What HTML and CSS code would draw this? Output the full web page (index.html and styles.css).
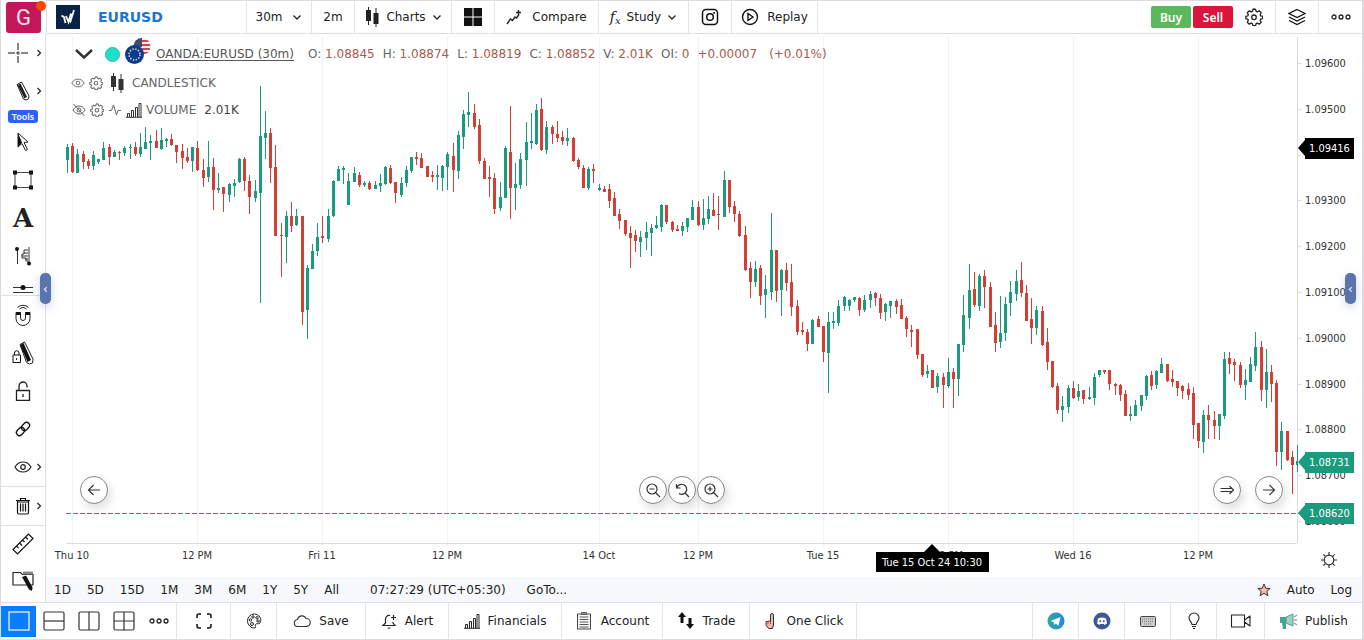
FILE: index.html
```html
<!DOCTYPE html>
<html lang="en">
<head>
    <meta charset="UTF-8">
    <meta name="viewport" content="width=device-width, initial-scale=1.0">
    <title>EURUSD Chart</title>
    <link rel="stylesheet" href="styles.css">
</head>
<body>
    <svg class="sprite" aria-hidden="true">
        <symbol id="chevron" viewBox="0 0 10 10"><path d="M1.5 3.5 5 7l3.5-3.5" fill="none" stroke="currentColor" stroke-width="1.3"/></symbol>
        <symbol id="caret" viewBox="0 0 6 8"><path d="M1.5 1 4.5 4l-3 3" fill="none" stroke="currentColor" stroke-width="1.2"/></symbol>
        <symbol id="gear" viewBox="0 0 18 18"><path d="M9 1l1.6.3.5 2 1.2.5 1.9-1 2 2-1 1.9.5 1.2 2 .5v2.2l-2 .5-.5 1.2 1 1.9-2 2-1.9-1-1.2.5-.5 2H7.9l-.5-2-1.2-.5-1.9 1-2-2 1-1.9-.5-1.2-2-.5V8.4l2-.5.5-1.2-1-1.9 2-2 1.9 1 1.2-.5.5-2z" fill="none" stroke="currentColor" stroke-width="1.3" stroke-linejoin="round"/><circle cx="9" cy="9.3" r="2.3" fill="none" stroke="currentColor" stroke-width="1.3"/></symbol>
        <symbol id="candles" viewBox="0 0 16 20"><path d="M4.5 0v18M12 1v19" stroke="currentColor" stroke-width="1"/><path d="M2 3h5v11H2zM9.5 6h5v11h-5z" fill="currentColor"/></symbol>
        <symbol id="bars" viewBox="0 0 16 16"><path d="M1.5 15v-3.500h2V15M5.500 15V8.500h2V15M9.500 15V5.500h2V15M13 15V1.500h2V15M0 15.300h16" fill="none" stroke="currentColor"/></symbol>
        <symbol id="dots" viewBox="0 0 20 8"><g fill="none" stroke="currentColor" stroke-width="1.3"><circle cx="3" cy="4" r="2"/><circle cx="10" cy="4" r="2"/><circle cx="17" cy="4" r="2"/></g></symbol>
        <symbol id="pencil" viewBox="0 0 16 20"><path d="M2 3.500 6.500 1 14 15l-.5 3-2.500 1L8.500 18z" fill="#fff" stroke="currentColor"/><path d="M2.500 4 5.500 2.500 12 16l-2.500 1.500z" fill="currentColor"/></symbol>
        <symbol id="eye" viewBox="0 0 18 12"><g fill="none" stroke="currentColor" stroke-width="1.2"><path d="M1 6c2-3.500 5-5 8-5s6 1.500 8 5c-2 3.500-5 5-8 5S3 9.500 1 6z"/><circle cx="9" cy="6" r="2.3"/></g></symbol>
        <symbol id="lock" viewBox="0 0 16 20"><g fill="none" stroke="currentColor" stroke-width="1.3"><path d="M1.500 9.500h13v10h-13zM4 9V5a4 4 0 0 1 8 0v1.500M8 13v3"/></g></symbol>
    </svg>

    <div class="app">
        <button class="profile" aria-label="Profile">G<span class="dot"></span></button>

        <header class="topbar">
            <div class="symbol">
                <svg class="brand" viewBox="0 0 24 24"><path d="M0 0h24v24H0z" fill="#0a2245"/><path d="M5.500 10.500 8 12l1.500 6M10 11l2.500 6L15 8.500M13 13l1.500 3L18 5" fill="none" stroke="#fff" stroke-width="1.800"/></svg>
                <a href="#">EURUSD</a>
            </div>
            <button class="cell interval">30m <svg class="ic-10"><use href="#chevron"/></svg></button>
            <button class="cell quick">2m</button>
            <button class="cell charts"><svg class="ic-candles"><use href="#candles"/></svg> Charts <svg class="ic-10"><use href="#chevron"/></svg></button>
            <button class="cell icon-cell" aria-label="Layout"><svg class="ic-20" viewBox="0 0 20 20"><path d="M1 1h8.500v8.500H1zM10.500 1H19v8.500h-8.500zM1 10.500h8.500V19H1zM10.500 10.500H19V19h-8.500z" fill="#111"/></svg></button>
            <button class="cell compare"><svg class="ic-16" viewBox="0 0 16 16"><path d="M1 15l3.500-5 2 1.500L9 8l1.500 1L13 5.500M12.500 1v5M10 3.500h5" fill="none" stroke="#222" stroke-width="1.400"/></svg> Compare</button>
            <button class="cell study"><i class="fx">f<sub>x</sub></i> Study <svg class="ic-10"><use href="#chevron"/></svg></button>
            <button class="cell icon-cell" aria-label="Snapshot"><svg class="ic-18" viewBox="0 0 18 18"><g fill="none" stroke="#111" stroke-width="1.500"><rect x="1.500" y="1.500" width="15" height="15" rx="3.500"/><circle cx="9" cy="9" r="3.300"/></g><circle cx="13" cy="5" r="1" fill="#111"/></svg></button>
            <button class="cell replay"><svg class="ic-18" viewBox="0 0 18 18"><g fill="none" stroke="#111" stroke-width="1.400"><circle cx="9" cy="9" r="7.500"/><path d="M7 5.500v7L12 9z"/></g></svg> Replay</button>
            <div class="orders">
                <button class="buy">Buy</button>
                <button class="sell">Sell</button>
            </div>
            <button class="cell icon-cell" aria-label="Settings"><svg class="ic-18"><use href="#gear"/></svg></button>
            <button class="cell icon-cell" aria-label="Layers"><svg class="ic-18" viewBox="0 0 18 18"><path d="M9 1.500 17 5.500 9 9.500 1 5.500zM1 9l8 4 8-4M1 12.500l8 4 8-4" fill="none" stroke="#111" stroke-width="1.300"/></svg></button>
            <button class="cell icon-cell last" aria-label="More"><svg class="ic-dots"><use href="#dots"/></svg></button>
        </header>

        <nav class="sidebar">
            <div class="tools grow">
                <button aria-label="Crosshair" class="has-caret crosshair"><svg class="ic-20" viewBox="0 0 20 20"><path d="M10 0v7M10 13v7M0 10h7M13 10h7" stroke="#111"/><path d="M9 9h2v2H9z" fill="none" stroke="#111" stroke-width=".8"/></svg><svg class="ic-caret"><use href="#caret"/></svg></button>
                <button aria-label="Drawing tools" class="has-caret"><svg class="ic-pencil"><use href="#pencil"/></svg><svg class="ic-caret"><use href="#caret"/></svg></button>
                <span class="tag">Tools</span>
                <button aria-label="Pointer"><svg class="ic-20" viewBox="0 0 20 20"><path d="M5 1l10 9-4 .5 3.500 7-2 1-3.500-7L5 15z" fill="#fff" stroke="#222"/><path d="M5 1l4 9.500L5 15z" fill="#111"/></svg></button>
                <button aria-label="Rectangle"><svg class="ic-22" viewBox="0 0 22 22"><path d="M3 3.500h16v15H3z" fill="none" stroke="#444"/><path d="M1 1.500h4v4H1zM17 1.500h4v4h-4zM1 16.500h4v4H1zM17 16.500h4v4h-4z" fill="#111"/></svg></button>
                <button aria-label="Text" class="letter">A</button>
                <button aria-label="Volume profile"><svg class="ic-20" viewBox="0 0 20 20"><path d="M4.500 2v16M16 1v16M15 4h-4v4H9v4h4v3h2M15 7h-4M15 10H9M15 13h-3" fill="none" stroke="#333"/><circle cx="4" cy="3" r="2" fill="#111"/><circle cx="16" cy="17.500" r="2" fill="#111"/></svg></button>
                <button aria-label="Lines" class="clipped"><svg class="ic-22" viewBox="0 0 22 22"><path d="M1 11.500h20M1 16.500h20" stroke="#333"/><circle cx="11" cy="11.500" r="2.500" fill="#111"/></svg></button>
            </div>
            <div class="tools">
                <button aria-label="Magnet"><svg class="ic-22" viewBox="0 0 22 22"><g fill="none" stroke="#222"><path d="M4 8.500v6a7 7 0 0 0 14 0v-6h-4.500v5.500a2.500 2.500 0 0 1-5 0V8.500zM7.500 5a5 5 0 0 1 7 0M5.500 3.500a8 8 0 0 1 11 0"/></g><path d="M4 8h4.500v3H4zM13.500 8H18v3h-4.500z" fill="#111"/></svg></button>
                <button aria-label="Stay in drawing mode"><svg class="ic-lockpen" viewBox="0 0 22 24"><path d="M1 14h7.500v7.500H1zM2.500 14v-2a2.200 2.200 0 0 1 4.500 0v2M4.700 17v2" fill="none" stroke="#111"/><path d="M8 3.500 12.500 1 21 18l-.5 4-3 1-3-1.500z" fill="#fff" stroke="#222"/><path d="M8 4l3.500-2 7.500 17-3.500 2z" fill="#111"/></svg></button>
                <button aria-label="Lock drawings"><svg class="ic-pencil"><use href="#lock"/></svg></button>
                <button aria-label="Link"><svg class="ic-18" viewBox="0 0 18 18"><g fill="none" stroke="#111" stroke-width="1.300"><rect x="-4.500" y="-3" width="9" height="6" rx="3" transform="translate(11.500 6.500) rotate(-45)"/><rect x="-4.500" y="-3" width="9" height="6" rx="3" transform="translate(6.500 11.500) rotate(-45)"/></g></svg></button>
                <button aria-label="Hide drawings" class="has-caret"><svg class="ic-eye"><use href="#eye"/></svg><svg class="ic-caret"><use href="#caret"/></svg></button>
            </div>
            <div class="tools">
                <button aria-label="Delete" class="has-caret"><svg class="ic-18" viewBox="0 0 18 18"><path d="M2 3.500h14M6.500 3V1.500h5V3M3.500 4v11.500a1.500 1.500 0 0 0 1.500 1.500h8a1.500 1.500 0 0 0 1.500-1.500V4M6.500 6.500v8M9 6.500v8M11.500 6.500v8M3 5h12" fill="none" stroke="#111" stroke-width="1.200"/></svg><svg class="ic-caret"><use href="#caret"/></svg></button>
            </div>
            <div class="tools bottom">
                <button aria-label="Measure"><svg class="ic-22" viewBox="0 0 22 22"><path d="M1 16.500 16.500 1 21 5.500 5.500 21zM4.500 13l2 2M7.500 10l2.500 2.500M10.500 7l2 2M13.500 4l2.500 2.500" fill="none" stroke="#111" stroke-width="1.200"/></svg></button>
                <button aria-label="Saved drawings"><svg class="ic-22" viewBox="0 0 22 22"><path d="M1 3.500h7.500l2 2H21V16H1z" fill="none" stroke="#222" stroke-width="1.200"/><path d="M11 2.500h10v3H11z" fill="#888"/><path d="M10 8l4-1.500 6.500 12-.5 3.500-3-1.500z" fill="#111"/></svg></button>
            </div>
        </nav>

        <main class="workspace">
            <section class="chart">
                <svg id="plot" class="plot"></svg>

                <div class="legend">
                    <div class="legend-row first">
                        <svg class="ic-toggle" viewBox="0 0 20 12"><path d="M2 2l8 7.500L18 2" fill="none" stroke="#333" stroke-width="2.500"/></svg>
                        <span class="status"></span>
                        <svg class="flags" viewBox="0 0 26 26"><defs><clipPath id="us"><circle cx="17" cy="8.500" r="8.500"/></clipPath></defs><g clip-path="url(#us)"><path d="M8 0h18v18H8z" fill="#eee"/><path d="M8 3h18M8 7h18M8 11h18M8 15h18" stroke="#d0454c" stroke-width="2"/><path d="M8 0h9v9H8z" fill="#414a68"/></g><circle cx="9.500" cy="16.500" r="9.500" fill="#073b97"/><circle cx="9.500" cy="16.500" r="5.500" fill="none" stroke="#e8dc7a" stroke-width="1.500" stroke-dasharray="1.500 1.380"/></svg>
                        <a href="#" class="pair">OANDA:EURUSD (30m)</a>
                        <div class="quotes">
                            <span>O: <b>1.08845</b></span>
                            <span>H: <b>1.08874</b></span>
                            <span>L: <b>1.08819</b></span>
                            <span>C: <b>1.08852</b></span>
                            <span>V: <b>2.01K</b></span>
                            <span>OI: <b>0</b></span>
                            <b>+0.00007</b>
                            <b class="pct">(+0.01%)</b>
                        </div>
                    </div>
                    <div class="legend-row">
                        <svg class="ic-eye-s"><use href="#eye"/></svg>
                        <svg class="ic-14"><use href="#gear"/></svg>
                        <svg class="ic-candles"><use href="#candles"/></svg>
                        <span>CANDLESTICK</span>
                    </div>
                    <div class="legend-row tight">
                        <svg class="ic-14" viewBox="0 0 14 14"><path d="M1 7c2-3 4-4 6-4s4.500 1 6 4c-1.500 3-4 4-6 4S3 10 1 7zM1.500 1l11 12" fill="none" stroke="currentColor"/><circle cx="7" cy="7" r="2" fill="none" stroke="currentColor"/></svg>
                        <svg class="ic-14"><use href="#gear"/></svg>
                        <svg class="ic-14" viewBox="0 0 14 14"><path d="M1 7.500h2.500l2-5.500 3 10 1.500-4.500h3" fill="none" stroke="currentColor"/></svg>
                        <svg class="ic-16 dark"><use href="#bars"/></svg>
                        <span>VOLUME</span>
                        <span class="amount">2.01K</span>
                    </div>
                </div>

                <div class="nav-left">
                    <button class="round" aria-label="Scroll left"><svg class="ic-16" viewBox="0 0 16 16"><path d="M14 8H2.500M7.500 3l-5 5 5 5"/></svg></button>
                </div>
                <div class="nav-zoom">
                    <button class="round" aria-label="Zoom out"><svg class="ic-16" viewBox="0 0 16 16"><circle cx="7" cy="7" r="5"/><path d="M10.500 10.500 15 15M4.500 7h5"/></svg></button>
                    <button class="round" aria-label="Reset zoom"><svg class="ic-16" viewBox="0 0 16 16"><path d="M2.500 2v4h4M3 5.500A5 5 0 1 1 5 11.500M10.500 10.500 15 15"/></svg></button>
                    <button class="round" aria-label="Zoom in"><svg class="ic-16" viewBox="0 0 16 16"><circle cx="7" cy="7" r="5"/><path d="M10.500 10.500 15 15M4.500 7h5M7 4.500v5"/></svg></button>
                </div>
                <div class="nav-right">
                    <button class="round" aria-label="Go to latest"><svg class="ic-16" viewBox="0 0 16 16"><path d="M1.500 6.500h11M1.500 9.500h11M10.500 4l4 4-4 4"/></svg></button>
                    <button class="round" aria-label="Scroll right"><svg class="ic-16" viewBox="0 0 16 16"><path d="M2 8h11.500M8.500 3l5 5-5 5"/></svg></button>
                </div>
                <button class="theme" aria-label="Theme"><svg class="ic-16" viewBox="0 0 16 16"><circle cx="8" cy="8" r="4.800"/><path d="M8 0v3M8 13v3M0 8h3M13 8h3M2.300 2.300l2 2M11.700 11.700l2 2M2.300 13.700l2-2M11.700 4.300l2-2"/></svg></button>
                <button class="handle left" aria-label="Toggle tools">‹</button>
                <button class="handle right" aria-label="Toggle panel">‹</button>
            </section>

            <div class="ranges">
                <button>1D</button>
                <button>5D</button>
                <button>15D</button>
                <button>1M</button>
                <button>3M</button>
                <button>6M</button>
                <button>1Y</button>
                <button>5Y</button>
                <button>All</button>
                <button class="clock">07:27:29 (UTC+05:30)</button>
                <button>GoTo...</button>
                <button class="star" aria-label="Favourite"><svg class="ic-14" viewBox="0 0 14 14"><path d="M7 1l1.800 4.200 4.400.3-3.400 2.900 1.100 4.400L7 10.400l-3.900 2.400 1.100-4.400L.8 5.500l4.400-.3z" fill="#f7b9b4" stroke="#333"/></svg></button>
                <button>Auto</button>
                <button>Log</button>
            </div>
        </main>

        <footer class="bottombar">
            <div class="layouts">
                <button class="active" aria-label="Single"><svg class="ic-22" viewBox="0 0 22 22"><rect x="1" y="2" width="20" height="18"/></svg></button>
                <button aria-label="Two rows"><svg class="ic-22" viewBox="0 0 22 22"><rect x="1" y="2" width="20" height="18" rx="1.500"/><path d="M1 11h20"/></svg></button>
                <button aria-label="Two columns"><svg class="ic-22" viewBox="0 0 22 22"><rect x="1" y="2" width="20" height="18" rx="1.500"/><path d="M11 2v18"/></svg></button>
                <button aria-label="Grid"><svg class="ic-22" viewBox="0 0 22 22"><rect x="1" y="2" width="20" height="18" rx="1.500"/><path d="M1 11h20M11 2v18"/></svg></button>
                <button aria-label="More layouts"><svg class="ic-dots"><use href="#dots"/></svg></button>
            </div>
            <button class="cell full" aria-label="Fullscreen"><svg class="ic-16" viewBox="0 0 16 16"><path d="M1 5V3a2 2 0 0 1 2-2h2M11 1h2a2 2 0 0 1 2 2v2M15 11v2a2 2 0 0 1-2 2h-2M5 15H3a2 2 0 0 1-2-2v-2" fill="none" stroke="#111" stroke-width="1.500"/></svg></button>
            <button class="cell palette" aria-label="Colors"><svg class="ic-16" viewBox="0 0 16 16"><g fill="none" stroke="#222"><path d="M8 1a7 7 0 1 0 1 14c1.500-.5 0-2 .5-3.500s3 0 4.500-1.500C16.500 6 13 1 8 1z"/><circle cx="4.500" cy="7" r="1.200"/><circle cx="7" cy="4" r="1.200"/><circle cx="11" cy="4.800" r="1.200"/><circle cx="12" cy="8" r="1.200"/><circle cx="6" cy="11" r="1.500"/></g></svg></button>
            <button class="cell save"><svg class="ic-18" viewBox="0 0 18 18"><path d="M5 14.500a3.500 3.500 0 0 1-.5-7 4.500 4.500 0 0 1 8.500-1 4 4 0 0 1 .5 8z" fill="none" stroke="#333" stroke-width="1.100"/></svg> Save</button>
            <button class="cell alert"><svg class="ic-16" viewBox="0 0 16 16"><path d="M9 2.500c-3-.5-4.500 1.500-4.500 4V10L2 12.500h12L12 10V9M6.500 15h3M12.500 2v5M10 4.500h5" fill="none" stroke="#222" stroke-width="1.200"/></svg> Alert</button>
            <button class="cell financials"><svg class="ic-16"><use href="#bars"/></svg> Financials</button>
            <button class="cell account"><svg class="ic-18" viewBox="0 0 18 18"><path d="M2.500 2h13v15h-13z" fill="none" stroke="#444"/><path d="M6.500.5h5v2h-5zM4.500 5h9M4.500 7.500h9M4.500 10h9M4.500 12.500h9M4.500 15h9" fill="none" stroke="#555"/></svg> Account</button>
            <button class="cell trade"><svg class="ic-18" viewBox="0 0 18 18"><path d="M5 0l4 5H6.500v6h-3V5H1zM13 17l-4-5h2.500V6h3v6H17z" fill="#111"/></svg> Trade</button>
            <button class="cell oneclick"><svg class="ic-16" viewBox="0 0 16 16"><path d="M7.500 8V2a1.500 1.500 0 0 1 3 0v10l-1 3.500H5.500L3 12V8.500z" fill="#f4b5b0" stroke="#333"/><path d="M5 8v3M7.500 8v3" stroke="#a55"/></svg> One Click</button>
            <span class="fill"></span>
            <a href="#" class="cell social" aria-label="Telegram"><svg class="ic-18" viewBox="0 0 18 18"><defs><linearGradient id="tg"><stop offset="0" stop-color="#2fa99a"/><stop offset="1" stop-color="#1b8be0"/></linearGradient></defs><circle cx="9" cy="9" r="8.500" fill="url(#tg)"/><path d="M3.500 9 13.500 5l-2 9-3-2.500L7 13l-.3-3z" fill="#fff"/></svg></a>
            <a href="#" class="cell social" aria-label="Discord"><svg class="ic-18" viewBox="0 0 18 18"><circle cx="9" cy="9" r="8.500" fill="#3e5694"/><path d="M5 6.500q4-2 8 0l1 5-2.500 1.500-.5-1H7l-.5 1L4 11.500z" fill="#fff"/><circle cx="7.300" cy="9.300" r="1" fill="#3e5694"/><circle cx="10.700" cy="9.300" r="1" fill="#3e5694"/></svg></a>
            <button class="cell social" aria-label="Shortcuts"><svg class="ic-16" viewBox="0 0 16 16"><rect x=".5" y="3.500" width="15" height="10" rx="1" fill="#ccc" stroke="#444"/><path d="M2 6h12M2 8.500h12M4 11h8" stroke="#777" stroke-dasharray="1 1"/></svg></button>
            <button class="cell social" aria-label="Ideas"><svg class="ic-18" viewBox="0 0 18 18"><path d="M7 12.500C7 10 4 9 4 6a5 5 0 0 1 10 0c0 3-3 4-3 6.500zM7 14.500h4M8 16.500h2" fill="none" stroke="#222" stroke-width="1.100"/></svg></button>
            <button class="cell video" aria-label="Record"><svg class="ic-22" viewBox="0 0 22 22"><path d="M1.500 5h13v12h-13zM14.500 10l5.500-4v10l-5.500-4" fill="none" stroke="#222" stroke-width="1.100" stroke-linejoin="round"/></svg></button>
            <button class="cell publish"><svg class="ic-18" viewBox="0 0 18 18"><path d="M1 5h6v6H1z" fill="#4f9f8e"/><path d="M7 5l7-3v12l-7-3z" fill="#9fcfc2" stroke="#4f9f8e"/><path d="M3 11h4v6H4z" fill="#4f9f8e"/><path d="M15 5l3-2M15 8h3M15 11l3 2" stroke="#777"/></svg> Publish</button>
        </footer>
    </div>

    <script src="chart.js"></script>
</body>
</html>
```
FILE: styles.css
```css
* {
    box-sizing: border-box;
}
body {
    margin: 0;
    font-family: "DejaVu Sans", Verdana, sans-serif;
    font-size: 12px;
    color: #222;
    background: #fff;
}
button {
    font: inherit;
    color: inherit;
    background: none;
    border: none;
    padding: 0;
    cursor: pointer;
}
svg {
    display: block;
    flex: none;
}
.sprite {
    position: absolute;
    width: 0;
    height: 0;
}
.app {
    display: grid;
    grid-template-columns: 45px minmax(0, 1fr);
    grid-template-rows: 34px minmax(0, 1fr) 37px;
    height: 100vh;
    border: 1px solid #dcdce0;
    border-right: 2px solid #dcdce0;
    border-top-width: 0;
}

/* icon sizes */
.ic-10 { width: 10px; height: 10px; }
.ic-14 { width: 14px; height: 14px; }
.ic-16 { width: 16px; height: 16px; }
.ic-18 { width: 18px; height: 18px; }
.ic-20 { width: 20px; height: 20px; }
.ic-22 { width: 22px; height: 22px; }
.ic-candles { width: 16px; height: 20px; }
.ic-dots { width: 20px; height: 8px; }
.ic-caret { width: 6px; height: 8px; }
.ic-pencil { width: 16px; height: 20px; }
.ic-lockpen { width: 22px; height: 24px; }
.ic-eye { width: 18px; height: 12px; }
.ic-eye-s { width: 14px; height: 10px; }
.ic-toggle { width: 20px; height: 12px; }

/* top bar */
.profile {
    position: relative;
    justify-self: center;
    width: 35px;
    height: 31px;
    margin-top: 2px;
    border-radius: 3px;
    background: #c2185b;
    color: #fbe3ec;
    font-family: Roboto, sans-serif;
    font-size: 22px;
}
.dot {
    position: absolute;
    top: -1px;
    right: -5px;
    width: 10px;
    height: 10px;
    border-radius: 50%;
    background: #ff4500;
}
.topbar {
    display: flex;
    border-top: 1px solid #dcdce0;
    border-bottom: 1px solid #dfdfe4;
    border-left: 1px solid #dfdfe4;
}
.symbol {
    display: flex;
    align-items: center;
    gap: 18px;
    width: 200px;
    padding-left: 9px;
    border-right: 1px solid #e3e3e8;
}
.symbol a {
    color: #1976d2;
    font-size: 14px;
    font-weight: bold;
    text-decoration: none;
}
.brand {
    width: 24px;
    height: 24px;
}
.cell {
    display: flex;
    align-items: center;
    justify-content: center;
    gap: 8px;
    border-right: 1px solid #e3e3e8;
    white-space: nowrap;
}
.interval {
    width: 65px;
    gap: 10px;
}
.quick { width: 43px; }
.charts { width: 97px; gap: 6px; }
.icon-cell { width: 43px; }
.compare { width: 104px; gap: 10px; }
.study { width: 90px; gap: 6px; }
.replay { width: 86px; }
.last { border-right: none; }
.fx {
    font-family: "DejaVu Serif", serif;
    font-size: 14px;
}
.fx sub {
    font-size: 10px;
    vertical-align: -2px;
}
.orders {
    display: flex;
    align-items: center;
    gap: 2px;
    margin-left: auto;
}
.orders button {
    width: 40px;
    height: 22px;
    border-radius: 2px;
    color: #fff;
    font-family: "Noto Sans", sans-serif;
    font-size: 12px;
    font-weight: 600;
}
.orders .buy { background: #5cb85c; }
.orders .sell { background: #dc143c; }

/* left tools */
.sidebar {
    display: flex;
    flex-direction: column;
    border-right: 1px solid #dfdfe4;
}
.tools {
    display: flex;
    flex-direction: column;
    border-bottom: 1px solid #dfdfe4;
}
.tools.grow {
    flex: 1;
    min-height: 0;
    overflow: hidden;
}
.tools button {
    display: flex;
    align-items: center;
    justify-content: center;
    flex: none;
    height: 38px;
    position: relative;
}
.tools .has-caret .ic-caret {
    position: absolute;
    right: 3px;
}
.tools .crosshair {
    padding-right: 10px;
}
.tools .letter {
    font-family: "DejaVu Serif", serif;
    font-size: 26px;
    font-weight: bold;
    line-height: 1;
}
.tools .clipped {
    height: 24px;
}
.tools.bottom {
    border-bottom: none;
    padding-bottom: 4px;
}
.tools.bottom button {
    height: 36px;
}
.tag {
    align-self: center;
    height: 13px;
    padding: 0 4px;
    border-radius: 3px;
    background: #2962ff;
    color: #fff;
    font-family: "Noto Sans", sans-serif;
    font-size: 9px;
    font-weight: 600;
    line-height: 13px;
}

/* chart */
.workspace {
    display: flex;
    flex-direction: column;
    min-width: 0;
}
.chart {
    position: relative;
    flex: 1;
    min-height: 0;
}
.plot {
    position: absolute;
    width: 100%;
    height: 100%;
}
.plot text {
    font-family: "DejaVu Sans Condensed", "DejaVu Sans", sans-serif;
    font-stretch: condensed;
    font-size: 11px;
    fill: #333;
}
.plot text.on-tag { fill: #fff; }
.plot .middle { text-anchor: middle; }
.grid { stroke: #eff2fa; }
.axis { stroke: #dcdce2; }
.up { fill: #1a9b7d; }
.down { fill: #d43f35; }
.level {
    stroke: #1a9b7d;
    stroke-dasharray: 5 2;
}
.ink { fill: #000; }

.legend {
    position: absolute;
    top: 5px;
    left: 25px;
}
.legend-row {
    display: flex;
    align-items: center;
    gap: 4px;
    height: 28px;
    color: #666;
}
.legend-row.first {
    gap: 5px;
    height: 30px;
    padding-left: 3px;
}
.legend b {
    color: #a35c50;
    font-weight: normal;
}
.legend .pair {
    color: #555;
    text-underline-offset: 2px;
}
.quotes {
    display: flex;
    gap: 8px;
    margin-left: 9px;
}
.legend .pct {
    margin-left: 4px;
}
.legend .status {
    width: 15px;
    height: 15px;
    margin-left: 6px;
    border: 1px solid #35b5a5;
    border-radius: 50%;
    background: #1de0cb;
}
.legend .flags {
    width: 26px;
    height: 26px;
    margin-bottom: 6px;
}
.legend .ic-candles,
.legend .dark {
    color: #333;
}
.legend .ic-candles {
    margin: 0 3px 0 2px;
}
.legend-row.tight {
    height: 26px;
    padding-left: 1px;
}
.amount {
    margin-left: 4px;
    color: #444;
}
.nav-left,
.nav-zoom,
.nav-right {
    position: absolute;
    bottom: 73px;
    display: flex;
}
.nav-left { left: 34px; }
.nav-zoom {
    left: 50%;
    gap: 1px;
    margin-left: -65px;
}
.nav-right {
    right: 79px;
    gap: 14px;
}
.round {
    display: flex;
    align-items: center;
    justify-content: center;
    width: 28px;
    height: 28px;
    border: 1px solid #888;
    border-radius: 50%;
    background: #fff;
    box-shadow: 3px 5px 10px rgba(0, 0, 0, 0.12);
}
.round svg,
.theme svg,
.layouts svg {
    fill: none;
    stroke: #333;
    stroke-width: 1.2;
}
.theme {
    position: absolute;
    right: 25px;
    bottom: 9px;
}
.handle {
    position: absolute;
    top: 239px;
    width: 11px;
    height: 31px;
    border-radius: 5px;
    background: #5a75ae;
    color: #fff;
    line-height: 28px;
    box-shadow: 0 3px 10px rgba(90, 117, 174, 0.3);
}
.handle.left { left: -6px; }
.handle.right { right: 6px; }

.ranges {
    display: flex;
    align-items: center;
    gap: 16px;
    height: 25px;
    padding: 0 10px 0 8px;
    background: #f7f8fb;
}
.ranges .clock {
    margin: 0 5px 0 15px;
}
.ranges .star {
    margin-left: auto;
}

/* bottom bar */
.bottombar {
    grid-column: 1 / -1;
    display: flex;
    border-top: 1px solid #dfdfe4;
}
.layouts {
    display: flex;
    align-items: center;
    width: 176px;
    border-right: 1px solid #e3e3e8;
}
.layouts button {
    display: flex;
    align-items: center;
    justify-content: center;
    width: 35px;
    height: 31px;
}
.layouts .active { background: #0a7cff; }
.layouts .active svg { stroke: #fff; }
.full { width: 54px; }
.palette { width: 46px; }
.save { width: 89px; }
.alert { width: 83px; }
.financials { width: 113px; }
.account { width: 101px; }
.trade { width: 87px; }
.oneclick { width: 107px; }
.social { width: 46px; }
.video { width: 48px; }
.publish {
    width: 97px;
    border-right: none;
}
.fill {
    flex: 1;
    border-right: 1px solid #e3e3e8;
}
```
FILE: chart.js
```js
// one candle per entry: colour, high, body top, body bottom, low
// levels are chart units counted downwards, 45.8 units = 0.001
const rows = `
g144,147,160,173 r143,146,172,173 g149,154,173,173 r151,154,162,169 r159,161,166,169 g151,155,166,170
g159,159,162,164 g142,148,160,160 r144,147,157,165 g150,152,157,157 r151,152,153,160 g146,148,153,156
g144,147,148,159 r142,147,154,156 g133,147,154,157 g127,142,149,149 g135,141,143,160 r130,141,148,148
g128,140,149,150 g138,139,141,147 r134,139,145,146 r145,145,152,163 r144,151,158,169 r148,157,161,163
g147,147,161,172 r141,148,170,171 r159,170,178,187 g141,167,177,182 r158,167,190,210 g173,188,190,193
r187,187,194,212 g183,184,195,202 g179,183,186,197 g158,159,182,183 r157,159,181,191 r175,181,197,214
g180,191,198,202 g86,136,193,303 g111,133,138,159 r128,133,168,183 r145,167,236,236 r223,235,236,277
g211,216,237,263 r202,216,226,232 g209,216,225,226 r216,216,312,325 g265,268,310,339 g244,251,269,269
g223,237,251,256 r216,236,238,243 g209,216,239,242 g180,181,216,217 g166,169,181,181 g166,168,170,184
g173,181,205,205 g167,173,182,182 r172,175,185,187 g181,183,185,187 r181,183,189,190 g181,185,189,189
g174,183,186,192 g166,167,184,185 r165,168,183,184 r182,182,193,203 g177,183,195,197 g166,170,183,187
g157,157,171,173 r152,157,159,165 r153,158,168,168 r166,166,177,177 r171,175,177,182 g165,175,177,190
g165,166,178,191 g152,154,167,190 r143,156,170,192 g131,135,171,179 g110,114,137,149 g92,112,115,127
r104,113,127,129 r119,125,161,164 r158,161,179,179 r166,177,179,197 r173,178,209,214 g182,197,208,211
g146,148,198,198 r106,152,188,219 g163,184,188,210 g153,159,185,189 g122,142,160,186 g113,141,143,149
g104,110,144,145 r98,109,150,151 g121,127,150,154 r125,127,134,144 r121,134,138,142 r131,137,141,145
g128,138,141,146 r137,138,161,162 r158,160,167,169 r165,168,188,188 g167,169,188,190 r164,169,171,183
g184,188,190,191 r186,189,192,192 r184,189,201,208 r192,198,216,216 r209,214,221,229 r220,220,234,236
r226,233,238,268 r230,235,241,252 g231,237,242,257 g222,232,238,250 g224,228,233,256 g216,225,228,229
g204,205,227,232 r205,205,222,224 r221,222,230,232 r225,229,231,231 g222,226,231,236 g218,218,227,232
g200,207,220,220 r201,207,225,226 g199,218,225,230 g196,209,219,224 r193,210,216,216 r196,214,215,230
g171,180,217,217 r180,180,207,213 r201,206,214,222 r211,214,236,237 r226,235,270,271 r262,268,282,298
g261,269,282,287 r265,268,296,305 g275,289,295,318 g213,250,292,300 r250,250,291,302 g269,270,290,316
r263,270,283,291 r264,282,307,316 r300,306,332,335 r322,330,332,335 r329,332,344,351 g319,320,344,344
r316,319,327,327 r326,326,352,362 g312,322,353,393 g312,321,323,329 g300,306,323,326 g296,297,306,311
g299,300,306,311 g297,297,300,302 r297,298,310,316 g295,300,310,312 g291,294,300,308 r292,293,298,306
r294,298,313,319 g303,304,312,321 g301,301,306,318 r299,301,307,314 r299,305,319,319 r316,318,329,337
r325,330,332,347 r329,329,355,359 r354,354,375,377 g365,371,374,378 r370,370,388,388 g373,376,387,393
r373,377,385,408 g358,372,386,388 r368,372,379,408 g344,344,379,396 g295,315,345,352 g264,290,318,329
r272,289,305,307 g274,276,306,311 r270,276,287,308 r282,287,327,327 r312,325,343,352 g296,333,342,348
g297,304,333,341 g281,292,303,316 g270,281,294,301 r262,280,293,297 r285,293,321,321 r298,319,328,344
g306,310,328,335 r306,311,345,346 r328,342,362,370 r361,361,387,388 r383,386,410,414 g396,406,410,422
g385,388,407,413 r381,388,398,399 g384,391,397,401 r390,390,399,404 g387,397,399,400 g373,377,398,405
g370,370,375,377 r370,370,372,374 r370,370,384,390 r383,384,386,395 r384,385,395,401 r390,394,416,416
g406,414,416,421 g400,405,416,416 g395,395,406,411 g375,376,396,400 r371,375,386,390 g370,371,385,389
g358,364,373,373 r364,364,381,382 r370,379,382,387 r381,381,388,396 r385,386,391,399 r383,389,395,400
r387,393,425,439 r423,423,441,448 g410,415,442,453 r405,415,420,439 r411,420,426,439 g414,414,426,440
g352,359,416,419 r352,358,364,374 r359,362,365,381 r362,365,385,388 g369,380,385,400 g357,364,382,382
g332,347,366,371 r341,347,390,401 g349,372,390,408 r365,372,384,402 r380,383,452,466 g422,431,452,470
r431,431,460,461 r451,457,465,494 g445,461,465,472`;

const candles = rows.trim().split(/\s+/).map(row => ({
    up: row[0] === 'g',
    levels: row.slice(1).split(',').map(Number)
}));

const dates = [
    [1, 'Thu 10'], [25, '12 PM'], [49, 'Fri 11'], [73, '12 PM'], [102, '14 Oct'],
    [121, '12 PM'], [145, 'Tue 15'], [169, '12 PM'], [193, 'Wed 16'], [217, '12 PM']
];

const FIRST_UNIT = 34;
const UNITS = 543;
const plot = document.getElementById('plot');

function add(name, attrs, text) {
    const node = document.createElementNS('http://www.w3.org/2000/svg', name);
    for (const key in attrs) node.setAttribute(key, attrs[key]);
    if (text) node.textContent = text;
    plot.appendChild(node);
}

function line(x1, y1, x2, y2, cls) {
    add('line', { x1: x1, y1: y1, x2: x2, y2: y2, class: cls });
}

function priceTag(right, y, price, cls) {
    add('path', { d: `M${right + 1} ${y}l7-8v-2h49v21h-49v-3z`, class: cls });
    add('text', { x: right + 12, y: y + 4, class: 'on-tag' }, price);
}

function draw() {
    plot.innerHTML = '';
    const width = plot.clientWidth;
    const height = plot.clientHeight;
    const left = 21;
    const right = width - 65;
    const base = height - 34;
    const step = (right - left) / (candles.length - 1);
    const toX = i => Math.floor(left + 0.5 + step * i);
    const toY = unit => Math.round((unit - FIRST_UNIT) * height / UNITS);

    dates.forEach(([i, label]) => {
        line(toX(i) + 0.5, 3, toX(i) + 0.5, base + 4, 'grid');
        add('text', { x: toX(i), y: base + 16, class: 'middle' }, label);
    });

    for (let n = 0; n <= 10; n++) {
        const y = toY(63 + n * 45.8);
        line(right, y + 0.5, right + 4, y + 0.5, 'axis');
        add('text', { x: right + 8, y: y + 4 }, (1.096 - n * 0.001).toFixed(5));
    }
    line(right + 0.5, 3, right + 0.5, base, 'axis');
    line(left - 1, base + 0.5, right, base + 0.5, 'axis');

    candles.forEach((candle, i) => {
        const [high, top, bottom, low] = candle.levels.map(toY);
        const cls = candle.up ? 'up' : 'down';
        const x = toX(i);
        const last = i === candles.length - 1;
        add('rect', { x: x, y: high, width: 1, height: Math.max(low - high, 1), class: cls });
        add('rect', { x: x - 1, y: top, width: last ? 2 : 3, height: Math.max(bottom - top, 1), class: cls });
    });

    line(left - 1, toY(513) + 0.5, right + 2, toY(513) + 0.5, 'level');
    priceTag(right, toY(148), '1.09416', 'ink');
    priceTag(right, toY(462), '1.08731', 'up');
    priceTag(right, toY(513), '1.08620', 'up');

    // crosshair time
    const x = toX(166);
    add('path', { d: `M${x} ${base + 1}l8 8h49v20h-113v-20h48z`, class: 'ink' });
    add('text', { x: x, y: base + 23, class: 'middle on-tag' }, 'Tue 15 Oct 24 10:30');
}

draw();
window.addEventListener('resize', draw);
```
